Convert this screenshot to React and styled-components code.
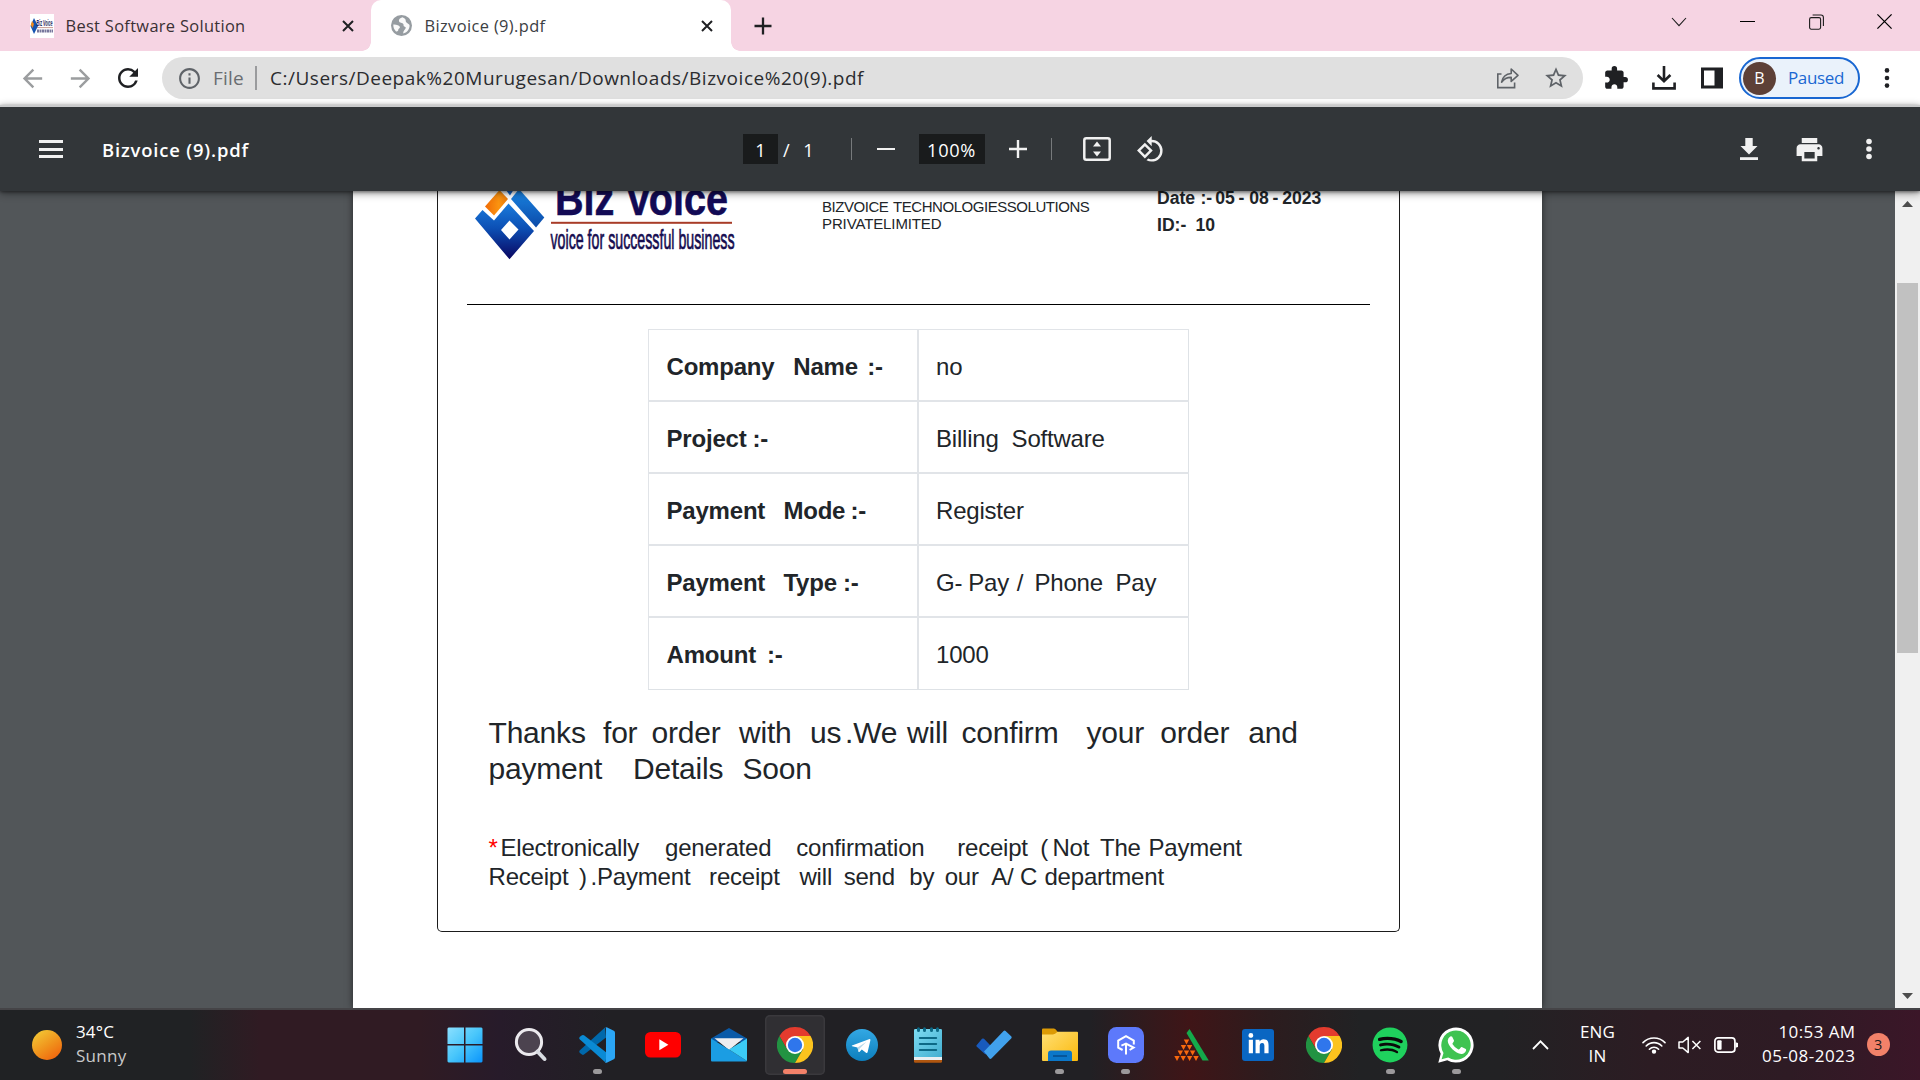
import React, { useLayoutEffect, useRef, useState } from 'react';
import styled, { createGlobalStyle, css } from 'styled-components';
import {
  MdArrowBack,
  MdArrowForward,
  MdRefresh,
  MdInfoOutline,
  MdStarBorder,
  MdExtension,
  MdPrint,
  MdRotate90DegreesCcw,
} from 'react-icons/md';
import { FaSpotify, FaLinkedinIn } from 'react-icons/fa';

const GlobalStyle = createGlobalStyle`
  *, *::before, *::after { box-sizing: border-box; }
  body { margin: 0; overflow: hidden; background: #525659; }
  svg { display: block; flex: none; }
`;

const ui = "'Open Sans', 'Noto Sans', sans-serif";
const doc = "'Liberation Sans', Arial, sans-serif";

const Screen = styled.div`
  width: 1920px;
  height: 1080px;
  display: flex;
  flex-direction: column;
  overflow: hidden;
  font-family: ${ui};
`;

/* ---------- text that is tracked to a given width ---------- */

const Label = styled.span`
  display: inline-block;
  white-space: pre;
  flex: none;
  font-size: ${(p) => p.$size}px;
  font-weight: ${(p) => p.$weight || 400};
  color: ${(p) => p.$color};
  margin-left: ${(p) => p.$ml || 0}px;
  line-height: 24px;
  ${(p) => p.$dy && css`padding-top: ${p.$dy}px;`}
`;

function Fit({ width, children, ...rest }) {
  const ref = useRef(null);
  const [spacing, setSpacing] = useState(0);
  useLayoutEffect(() => {
    const natural = ref.current.getBoundingClientRect().width;
    setSpacing((width - natural) / String(children).length);
  }, [width, children]);
  return (
    <Label ref={ref} style={{ letterSpacing: spacing }} {...rest}>
      {children}
    </Label>
  );
}

/* ---------- tab strip ---------- */

const TabStrip = styled.div`
  height: 51px;
  flex: none;
  display: flex;
  align-items: center;
  background: #f6d4e3;
`;

const Tab = styled.div`
  width: ${(p) => p.$w}px;
  height: 51px;
  flex: none;
  display: flex;
  align-items: center;
  padding: 0 ${(p) => p.$pr}px 0 ${(p) => p.$pl}px;
  ${(p) =>
    p.$active &&
    css`
      position: relative;
      background: #fff;
      border-radius: 10px 10px 0 0;
      &::before,
      &::after {
        content: '';
        position: absolute;
        bottom: 0;
        width: 9px;
        height: 9px;
      }
      &::before {
        left: -9px;
        background: radial-gradient(circle at 0 0, transparent 8.5px, #fff 9px);
      }
      &::after {
        right: -9px;
        background: radial-gradient(circle at 100% 0, transparent 8.5px, #fff 9px);
      }
    `}
`;

const Spacer = styled.div`
  flex: 1;
`;

const Slot = styled.div`
  width: ${(p) => p.$w}px;
  margin-left: ${(p) => p.$ml || 0}px;
  flex: none;
  display: flex;
  justify-content: center;
  align-items: center;
  color: ${(p) => p.$color || '#1f2023'};
`;

const WindowControls = styled.div`
  display: flex;
  height: 43px;
  align-self: flex-start;
  align-items: center;
  margin-left: auto;
  padding-right: 1px;
`;

const Cross = ({ size = 12, stroke = 2, color = '#1f2023' }) => (
  <svg width={size} height={size} viewBox="0 0 12 12">
    <path d="M1 1L11 11M11 1L1 11" stroke={color} strokeWidth={stroke} />
  </svg>
);

const BrandFavicon = () => (
  <svg width="24" height="24" viewBox="0 0 24 24">
    <rect width="24" height="24" fill="#fff" />
    <path d="M4 4L8 12L4 20L0.5 12Z" fill="#1553b0" />
    <path d="M2 7L4 10L2.6 14L0.8 11Z" fill="#f08a1c" />
    <text x="6.5" y="12" fontFamily={doc} fontSize="9" fontWeight="700" fill="#25245c" textLength="16" lengthAdjust="spacingAndGlyphs">Biz Voice</text>
    <path d="M7 13.6H23" stroke="#b98479" strokeWidth="0.8" />
    <path d="M7 17H23" stroke="#77779c" strokeWidth="3" strokeDasharray="2 0.5" />
  </svg>
);

const Globe = () => (
  <svg width="21" height="21" viewBox="0 0 21 21">
    <circle cx="10.5" cy="10.5" r="10.5" fill="#969ca1" />
    <path d="M11.5 2.2C8 3 7.2 5.6 8.6 7.2C10.5 8.3 12.8 8 12.6 10.2C12.2 11.6 14.4 11.2 14.8 12.6C14.4 15.2 12.4 15 12.2 18.5C15.8 17.8 18.6 14.7 18.6 10.6C18.4 9 16.6 9 15.6 7.6C14.2 6.8 15.4 4.4 13.6 3.4Z" fill="#fff" opacity="0.95" />
    <path d="M2.3 9.6C5 9.4 8.6 10.2 9 12.2C8.4 13.8 7 13.6 7.2 15.6C6.6 16.6 5.6 16.6 5 16.4C3 14.6 2.2 12.4 2.3 9.6Z" fill="#fff" opacity="0.95" />
  </svg>
);

/* ---------- address bar ---------- */

const AddressRow = styled.div`
  height: 54px;
  flex: none;
  display: flex;
  align-items: center;
  background: #fff;
`;

const Omnibox = styled.div`
  width: 1421px;
  height: 42px;
  margin-left: 10px;
  flex: none;
  display: flex;
  align-items: center;
  border-radius: 21px;
  background: #e0e0e0;
`;

const Bar = styled.div`
  width: ${(p) => p.$w || 1}px;
  height: ${(p) => p.$h}px;
  margin-left: ${(p) => p.$ml}px;
  flex: none;
  background: ${(p) => p.$color};
`;

const ProfilePill = styled.div`
  width: 121px;
  height: 42px;
  flex: none;
  display: flex;
  align-items: center;
  padding-left: 2px;
  border: 2px solid #1967d2;
  border-radius: 21px;
  background: #eaf2fb;
`;

const Avatar = styled.div`
  width: 33px;
  height: 33px;
  border-radius: 50%;
  flex: none;
  display: flex;
  align-items: center;
  justify-content: center;
  background: #5d4037;
  color: #fff;
  font-size: 16px;
`;

const Dots = ({ color, r = 2.3, gap = 7.5 }) => (
  <svg width="6" height="22" viewBox="-3 -11 6 22" fill={color}>
    <circle cy={-gap} r={r} />
    <circle r={r} />
    <circle cy={gap} r={r} />
  </svg>
);

const ShareIcon = () => (
  <svg width="24" height="22" viewBox="0 0 24 22" fill="none" stroke="#5f6368" strokeWidth="1.6">
    <path d="M5.5 7H1.8V20.6H18.6V15.5" />
    <path d="M5.6 15.2C6.6 9.6 9.6 6.9 15.2 6.5V2L22 8.4L15.2 14.4V10.4C10.8 10.3 8.2 11.6 5.6 15.2Z" strokeLinejoin="round" />
  </svg>
);

const TrayDownload = () => (
  <svg width="24" height="24" viewBox="0 0 24 24" fill="none" stroke="#1f2023" strokeWidth="2.6">
    <path d="M12 0V14M5.6 9L12 15.2L18.4 9" />
    <path d="M1.4 16.5V22.4H22.6V16.5" />
  </svg>
);

const SidePanel = () => (
  <svg width="22" height="22" viewBox="0 0 22 22">
    <path fillRule="evenodd" d="M0 0.5H22V21.5H0ZM3 3.5V18.5H13.5V3.5Z" fill="#1f2023" />
  </svg>
);

/* ---------- PDF viewer toolbar ---------- */

const ViewerBar = styled.div`
  height: 86px;
  flex: none;
  display: flex;
  align-items: center;
  position: relative;
  z-index: 2;
  border-top: 2px solid #c9cacb;
  background: #323639;
  box-shadow: 0 2px 8px rgba(0, 0, 0, 0.45), 0 1px 3px rgba(0, 0, 0, 0.4);
`;

const Field = styled.div`
  width: ${(p) => p.$w}px;
  height: 30px;
  margin-left: ${(p) => p.$ml}px;
  flex: none;
  display: flex;
  align-items: center;
  justify-content: center;
  background: #191b1c;
`;

const Burger = styled.div`
  width: 24px;
  height: 18px;
  margin-left: 39px;
  flex: none;
  border-top: 3px solid #f1f1f1;
  border-bottom: 3px solid #f1f1f1;
  padding-top: 4.5px;
  &::before {
    content: '';
    display: block;
    height: 3px;
    background: #f1f1f1;
  }
`;

const FitPage = () => (
  <svg width="28" height="24" viewBox="0 0 28 24">
    <rect x="1.3" y="1.3" width="25.4" height="21.4" rx="2" fill="none" stroke="#f1f1f1" strokeWidth="2.5" />
    <path d="M14 4.6L18 9.4H10ZM14 19.4L18 14.6H10Z" fill="#f1f1f1" />
  </svg>
);

const SaveIcon = () => (
  <svg width="18" height="22" viewBox="0 0 18 22" fill="#f1f1f1">
    <path d="M5.3 0H12.7V8H17.5L9 16.6L0.5 8H5.3Z" />
    <rect y="19.2" width="18" height="2.8" />
  </svg>
);

/* ---------- document ---------- */

const Viewport = styled.div`
  height: 817px;
  flex: none;
  display: flex;
  overflow: hidden;
  background: #525659;
`;

const Sheet = styled.div`
  width: 1189px;
  margin-left: 353px;
  flex: none;
  background: #fff;
  box-shadow: 0 0 7px rgba(0, 0, 0, 0.55);
`;

const Card = styled.div`
  width: 963px;
  height: 741px;
  margin-left: 84px;
  border: 1px solid #1b1b1b;
  border-top: none;
  border-radius: 0 0 5px 5px;
  font-family: ${doc};
  color: #212529;
`;

const Letterhead = styled.div`
  width: 903px;
  height: 114px;
  margin-left: 29px;
  display: flex;
  border-bottom: 1px solid #000;
`;

const Issuer = styled.div`
  width: 272px;
  margin-left: 85px;
  padding-top: 7px;
  font-size: 15px;
  line-height: 17.2px;
`;

const Meta = styled.div`
  margin-left: 63px;
  margin-top: -6px;
  font-size: 17.6px;
  font-weight: 700;
  line-height: 27px;
`;

const Line = styled.div`
  display: flex;
  height: ${(p) => p.$h}px;
  white-space: pre;
`;

const Word = styled.span`
  flex: none;
  width: ${(p) => p.$w}px;
  color: ${(p) => p.$color || 'inherit'};
  letter-spacing: ${(p) => p.$track || 0}px;
`;

const Table = styled.div`
  width: 541px;
  height: 361px;
  margin: 24px 0 0 210px;
  display: grid;
  grid-template-columns: 269px 272px;
  grid-auto-rows: 72px;
  border-bottom: 1px solid #dee2e6;
  border-right: 1px solid #dee2e6;
`;

const Cell = styled.div`
  padding: 0 0 0 ${(p) => (p.$head ? 17.5 : 17)}px;
  border-top: ${(p) => (p.$first ? 1 : 2)}px solid #e1e4e8;
  border-left: ${(p) => (p.$head ? 1 : 2)}px solid #e1e4e8;
  margin-top: ${(p) => (p.$first ? 0 : -1)}px;
  font-size: 24px;
  font-weight: ${(p) => (p.$head ? 700 : 400)};
  line-height: ${(p) => (p.$first ? 73 : 74)}px;
`;

const Thanks = styled.div`
  margin: 25px 0 0 50.5px;
  font-size: 30px;
  line-height: 36px;
`;

const Notice = styled.div`
  margin: 46px 0 0 50.5px;
  font-size: 24px;
  line-height: 29.4px;
`;

const rows = [
  [[['Company', 126.8], ['Name', 74], [':-', 20]], [['no', 30]]],
  [[['Project', 86], [':-', 20]], [['Billing', 75.6], ['Software', 95]]],
  [[['Payment', 116.9], ['Mode', 67], [':-', 20]], [['Register', 95]]],
  [[['Payment', 116.9], ['Type', 59.7], [':-', 20]], [['G-', 32.3], ['Pay', 48.5], ['/', 17.7], ['Phone', 81], ['Pay', 50]]],
  [[['Amount', 100.5], [':-', 20]], [['1000', 60]]],
];

const thanks = [
  [['Thanks', 114.5], ['for', 48.5], ['order', 87.5], ['with', 71], ['us', 35], ['.We', 62], ['will', 54.5], ['confirm', 125], ['your', 73.8], ['order', 87.9], ['and', 60]],
  [['payment', 144.5], ['Details', 109.5], ['Soon', 80]],
];

const notice = [
  [['*', 12, '#ff0000'], ['Electronically', 164.5], ['generated', 131.2], ['confirmation', 161], ['receipt', 83], ['(', 12.3], ['Not', 47.5], ['The', 48.5], ['Payment', 100]],
  [['Receipt', 90.5], [')', 11.6], ['.Payment', 118.5], ['receipt', 90.4], ['will', 44.2], ['send', 65.6], ['by', 35.4], ['our', 46.5], ['A/', 28.8], ['C', 24.5], ['department', 130]],
];

const Words = ({ words, height, track = -0.2 }) => (
  <Line $h={height}>
    {words.map(([text, width, color], i) => (
      <Word key={i} $w={width} $color={color} $track={track}>
        {text}
      </Word>
    ))}
  </Line>
);

const BrandLogo = () => (
  <svg width="270" height="80" viewBox="467 191 270 80">
    <defs>
      <linearGradient id="gem" x1="0" y1="0" x2="0" y2="1">
        <stop offset="0" stopColor="#1a7bdc" />
        <stop offset="0.45" stopColor="#0c4fb4" />
        <stop offset="1" stopColor="#0a0560" />
      </linearGradient>
      <linearGradient id="sky" x1="0" y1="0" x2="0" y2="1">
        <stop offset="0" stopColor="#1a86e4" />
        <stop offset="1" stopColor="#0c4aa8" />
      </linearGradient>
      <linearGradient id="amber" x1="0" y1="0" x2="1" y2="0">
        <stop offset="0" stopColor="#f06a05" />
        <stop offset="0.6" stopColor="#fb9410" />
        <stop offset="1" stopColor="#e8780a" />
      </linearGradient>
    </defs>
    <path d="M485 206.5L499.5 190L508 199L494 215.5Z" fill="url(#amber)" />
    <path d="M503 186L516 186L510 195.5Z" fill="#1263c4" />
    <path d="M475 218.5L482.5 210L494 220.5L508.5 203.5L534 231L509.5 259.3Z M509.5 220.5L501 230L509.5 239.5L518.5 229.5Z" fillRule="evenodd" fill="url(#gem)" />
    <path d="M511 199L519 189L544.3 217.5L536 227.5Z" fill="url(#sky)" />
    <text x="555" y="215" fontFamily={doc} fontSize="46" fontWeight="700" fill="#120a55" stroke="#120a55" strokeWidth="0.6" textLength="173" lengthAdjust="spacingAndGlyphs">Biz Voice</text>
    <rect x="551" y="221.8" width="181" height="2" fill="#a83c28" />
    <text x="550.5" y="249.3" fontFamily={doc} fontSize="28" fill="#150c50" stroke="#150c50" strokeWidth="0.7" textLength="184" lengthAdjust="spacingAndGlyphs">voice for successful business</text>
  </svg>
);

const Scrollbar = styled.div`
  width: 25px;
  margin-left: auto;
  flex: none;
  display: flex;
  flex-direction: column;
  align-items: center;
  padding: 10px 0 9px;
  background: #f0f0f0;
`;

const Thumb = styled.div`
  width: 21px;
  height: 370px;
  margin: 76px 0 auto;
  background: #c1c1c1;
`;

/* ---------- taskbar ---------- */

const Taskbar = styled.div`
  height: 72px;
  flex: none;
  display: flex;
  align-items: center;
  padding-bottom: 1px;
  border-top: 2px solid #454447;
  background: linear-gradient(
    90deg,
    #202224 0,
    #202224 190px,
    #301b23 260px,
    #301b23 420px,
    #271b2a 500px,
    #212024 610px,
    #212024 1090px,
    #3f1517 1190px,
    #2c1c1e 1270px,
    #212224 1360px,
    #222224 1500px,
    #2c1c23 1650px,
    #2e1b24 1790px,
    #3b1628 1920px
  );
`;

const Weather = styled.div`
  width: 435px;
  height: 100%;
  flex: none;
  display: flex;
  align-items: center;
  padding-left: 32px;
`;

const Stack = styled.div`
  display: flex;
  flex-direction: column;
  flex: none;
  align-items: ${(p) => p.$align};
  width: ${(p) => p.$w}px;
  margin-left: ${(p) => p.$ml}px;
  padding-bottom: 1px;
`;

const Sun = styled.div`
  width: 30px;
  height: 30px;
  flex: none;
  border-radius: 50%;
  background: linear-gradient(145deg, #f2c534 10%, #f0901b 55%, #f0650e 90%);
`;

const Apps = styled.div`
  display: flex;
  gap: 6.1px;
`;

const Tile = styled.div`
  width: 60px;
  height: 60px;
  flex: none;
  display: flex;
  align-items: center;
  justify-content: center;
  position: relative;
  border-radius: 5px;
  ${(p) =>
    p.$active &&
    css`
      background: #302f33;
      box-shadow: inset 0 0 0 1.5px #3a393d;
    `}
`;

const Indicator = styled.div`
  position: absolute;
  bottom: 1px;
  width: ${(p) => (p.$active ? 24 : 9)}px;
  height: 5px;
  border-radius: 2.5px;
  background: ${(p) => (p.$active ? '#f28169' : '#9b999b')};
`;

const WindowsLogo = () => (
  <svg width="36" height="36" viewBox="0 0 36 36">
    <defs>
      <linearGradient id="win" x1="0" y1="0" x2="1" y2="1">
        <stop offset="0" stopColor="#8be0ff" />
        <stop offset="0.5" stopColor="#48c6fb" />
        <stop offset="1" stopColor="#0a94fb" />
      </linearGradient>
    </defs>
    <path fill="url(#win)" d="M1.5 0.5H17V17H0.5V1.5ZM18.5 0.5H34.5L35.5 1.5V17H18.5ZM0.5 18.5H17V35.5H1.5L0.5 34.5ZM18.5 18.5H35.5V34.5L34.5 35.5H18.5Z" />
  </svg>
);

const SearchIcon = () => (
  <svg width="34" height="36" viewBox="0 0 34 36">
    <circle cx="15" cy="15" r="12.6" fill="#4c434f" stroke="#eceaee" strokeWidth="3" />
    <path d="M23.5 24.5L30.5 32" stroke="#d9dce2" strokeWidth="4" strokeLinecap="round" />
  </svg>
);

const VsCode = () => (
  <svg width="36" height="36" viewBox="0 0 36 36">
    <path d="M26 0.5L0.9 23.2Q-0.4 24.6 0.9 26L3 27.6Q4 28.2 5 27.5L27 10.5Z" fill="#0068ab" />
    <path d="M26.5 35.5L0.9 12.6Q-0.4 11.2 0.9 9.8L3 8.2Q4 7.6 5 8.3L28 26Z" fill="#0a8ad4" />
    <path d="M26.5 0.2Q27.4 0 28.2 0.5L34.8 3.8Q36 4.5 36 5.8V30.2Q36 31.5 34.8 32.2L28.2 35.5Q27.2 36 26 35.6Q27 35.2 27 33.5V2.5Q27 0.7 26.5 0.2Z" fill="#2ba6f5" />
  </svg>
);

const YouTube = () => (
  <svg width="36" height="26" viewBox="0 0 36 26">
    <rect width="36" height="25.5" rx="5.5" fill="#f00" />
    <path d="M14.3 7.2L23.4 12.7L14.3 18.2Z" fill="#fff" />
  </svg>
);

const Mail = () => (
  <svg width="36" height="34" viewBox="0 0 36 34">
    <path d="M0 10.5L18 0L36 10.5V14H0Z" fill="#0a5aa8" />
    <path d="M3.5 10.3H32.5L18 22Z" fill="#eeeef0" />
    <path d="M0 10.5L18 21.5L36 33V32.5Q36 33.5 35 33.5H1Q0 33.5 0 32.5Z" fill="#1b9de3" />
    <path d="M36 10.5V33L18 21.5Z" fill="#3bcbf5" />
  </svg>
);

const Chrome = () => (
  <svg width="36" height="36" viewBox="-18 -18 36 36">
    <path d="M0 -9H15.59A18 18 0 0 0 -15.59 -9L-7.8 4.5Z" fill="#e33b2e" />
    <path d="M-7.8 4.5L-15.59 -9A18 18 0 0 0 0 18L7.8 4.5Z" fill="#229342" />
    <path d="M7.8 4.5L0 18A18 18 0 0 0 15.59 -9H0Z" fill="#fcc31e" />
    <circle r="9" fill="#fff" />
    <circle r="7.2" fill="#2f76ec" />
  </svg>
);

const Telegram = () => (
  <svg width="32" height="32" viewBox="0 0 32 32">
    <defs>
      <linearGradient id="tg" x1="0" y1="0" x2="0" y2="1">
        <stop offset="0" stopColor="#33a8e4" />
        <stop offset="1" stopColor="#0d7fbd" />
      </linearGradient>
    </defs>
    <circle cx="16" cy="16" r="16" fill="url(#tg)" />
    <path d="M6 16.6L23.6 10Q24.6 10 24.4 11.2L21.6 23.2Q21.1 24.3 20 23.7L15.8 20.6L13.4 22.9Q12.6 23.4 12.4 22.4L11.5 18.6L6.2 17.3Q5.4 17 6 16.6Z" fill="#fff" />
    <path d="M11.5 18.6L20.5 12.8L13.7 19.4L12.9 22.6Z" fill="#b6d8ea" />
  </svg>
);

const Notepad = () => (
  <svg width="28" height="36" viewBox="0 0 28 36">
    <defs>
      <linearGradient id="np" x1="0" y1="0" x2="1" y2="1">
        <stop offset="0" stopColor="#7edcf2" />
        <stop offset="1" stopColor="#42aed0" />
      </linearGradient>
    </defs>
    <path d="M0 30H28V34.5Q28 35.8 26.8 35.8H1.2Q0 35.8 0 34.5Z" fill="#b0560f" />
    <path d="M0 28H28V33H0Z" fill="#e9eef1" />
    <path d="M0 3.2Q0 2 1.2 2H26.8Q28 2 28 3.2V30H0Z" fill="url(#np)" />
    <path d="M4.5 1.8V3.6M10.5 1.8V3.6M17.5 1.8V3.6M23.5 1.8V3.6" stroke="#0c6986" strokeWidth="3" strokeLinecap="round" />
    <path d="M5.8 11H22.2M5.8 17H22.2M5.8 23H22.2" stroke="#0c6986" strokeWidth="2" strokeLinecap="round" />
  </svg>
);

const Todo = () => (
  <svg width="36" height="30" viewBox="0 0 36 30">
    <path d="M0.6 15.2L6 8.8Q7 8 8 8.8L15.4 16.6L9.4 24.6L0.6 16.4Q0 15.8 0.6 15.2Z" fill="#185abd" />
    <path d="M8 21.5L27.6 1Q28.6 0 29.6 1L35.4 6.6Q36 7.4 35.4 8.2L15.4 28.6Q14.4 29.4 13.4 28.6Z" fill="#41a1ec" />
  </svg>
);

const Folder = () => (
  <svg width="36" height="34" viewBox="0 0 36 34">
    <defs>
      <linearGradient id="fd" x1="0" y1="0" x2="1" y2="1">
        <stop offset="0" stopColor="#ffdf74" />
        <stop offset="1" stopColor="#fbb90c" />
      </linearGradient>
    </defs>
    <path d="M0 1.5Q0 0.5 1 0.5H12Q13.2 0.5 15.5 3.6L14 8H0Z" fill="#dc9a05" />
    <path d="M0 6.5H11Q13 6.4 15.5 3.8H35Q36 3.8 36 4.8V32Q36 33 35 33H1Q0 33 0 32Z" fill="url(#fd)" />
    <path d="M6 33V25.5Q6 22.5 9 22.5H27Q30 22.5 30 25.5V33Z" fill="#0b77c9" />
    <path d="M11 28H25" stroke="#064f8e" strokeWidth="1.6" />
  </svg>
);

const HexApp = () => (
  <svg width="36" height="36" viewBox="0 0 36 36">
    <rect width="36" height="36" rx="8.5" fill="#5d79fb" />
    <g fill="none" stroke="#fff" strokeWidth="2">
      <path d="M14.6 23L10.2 20.6V13.6L18 9.2L25.8 13.6V17.6" />
      <path d="M18 27.4V16.8M13.4 18.6L18 16.6L25.6 20.6L21.6 23" />
    </g>
  </svg>
);

const Pyramid = () => (
  <svg width="36" height="34" viewBox="0 0 36 34">
    <path d="M12.5 5L15.5 1L34.8 32.5H28.5Z" fill="#14aa4b" />
    {[[12.5, 11.5], [9.5, 17], [15.5, 17], [6.3, 22.5], [12.5, 22.5], [18.6, 22.5], [3, 28], [9.2, 28], [15.6, 28], [22, 28]].map(([x, y], i) => (
      <path key={i} d={`M${x - 2.7} ${y}H${x + 2.7}L${x} ${y + 5}Z`} fill="#f9690e" />
    ))}
  </svg>
);

const LinkedInBox = styled.div`
  width: 32px;
  height: 32px;
  border-radius: 3px;
  display: flex;
  align-items: center;
  justify-content: center;
  background: #0a66c2;
  color: #fff;
`;

const SpotifyDisc = styled.div`
  width: 34px;
  height: 34px;
  border-radius: 50%;
  display: flex;
  align-items: center;
  justify-content: center;
  background: #0a0a0a;
  color: #1fd15d;
`;

const WhatsApp = () => (
  <svg width="36" height="36" viewBox="0 0 36 36">
    <path d="M0.3 35.7L2.7 26.7A17.6 17.6 0 1 1 9.3 33.3Z" fill="#fff" />
    <path d="M3.6 32.3L5.5 25.9A14.7 14.7 0 1 1 10.2 30.6Z" fill="#3fc351" />
    <path d="M12.2 9.6Q13.2 8.8 14.2 9.8L16 13.6Q16.2 14.6 14.8 16Q14.2 16.6 14.6 17.3Q16.6 20.8 20.4 22.4Q21 22.6 21.6 22L23 20.3Q23.5 19.8 24.3 20.2L27.8 22Q28.4 22.5 28 23.8Q26.8 27 23.3 26.9Q18.6 26.4 14.4 22.2Q10 17.8 9.7 13.8Q10 11 12.2 9.6Z" fill="#fff" />
  </svg>
);

const apps = [
  { id: 'start', icon: <WindowsLogo /> },
  { id: 'search', icon: <SearchIcon /> },
  { id: 'code', icon: <VsCode />, open: true },
  { id: 'youtube', icon: <YouTube /> },
  { id: 'mail', icon: <Mail /> },
  { id: 'chrome', icon: <Chrome />, open: true, active: true },
  { id: 'telegram', icon: <Telegram /> },
  { id: 'notepad', icon: <Notepad /> },
  { id: 'todo', icon: <Todo /> },
  { id: 'files', icon: <Folder />, open: true },
  { id: 'hex', icon: <HexApp />, open: true },
  { id: 'pyramid', icon: <Pyramid /> },
  { id: 'linkedin', icon: <LinkedInBox><FaLinkedinIn size={23} /></LinkedInBox> },
  { id: 'chrome2', icon: <Chrome /> },
  { id: 'spotify', icon: <SpotifyDisc><FaSpotify size={36} /></SpotifyDisc>, open: true },
  { id: 'whatsapp', icon: <WhatsApp />, open: true },
];

const Badge = styled.div`
  width: 23.5px;
  height: 23.5px;
  margin-left: 11px;
  flex: none;
  border-radius: 50%;
  display: flex;
  align-items: center;
  justify-content: center;
  background: #f28169;
  color: #1c1c1c;
  font-size: 14.5px;
`;

const Wifi = () => (
  <svg width="24" height="18" viewBox="0 0 24 18" fill="none" stroke="#fff" strokeWidth="1.6" strokeLinecap="round">
    <path d="M1 6.6A15.3 15.3 0 0 1 23 6.6M4.2 10A10.8 10.8 0 0 1 19.8 10M7.4 13.2A6.4 6.4 0 0 1 16.6 13.2" />
    <circle cx="12" cy="15.6" r="1.4" fill="#fff" />
  </svg>
);

const Muted = () => (
  <svg width="24" height="18" viewBox="0 0 24 18" fill="none" stroke="#fff" strokeWidth="1.5" strokeLinejoin="round">
    <path d="M1 6H4.8L10.2 1.4V16.6L4.8 12H1Z" />
    <path d="M14.4 5L22.4 13M22.4 5L14.4 13" />
  </svg>
);

const Battery = () => (
  <svg width="24" height="16" viewBox="0 0 24 16">
    <rect x="0.9" y="0.9" width="20" height="14.2" rx="3" fill="none" stroke="#fff" strokeWidth="1.7" />
    <rect x="3.2" y="3.2" width="4.4" height="9.6" rx="1" fill="#fff" />
    <path d="M21.5 5.2L24 6V10L21.5 10.8Z" fill="#fff" />
  </svg>
);

export default function App() {
  return (
    <Screen>
      <GlobalStyle />

      <TabStrip>
        <Tab $w={371} $pl={30} $pr={17}>
          <BrandFavicon />
          <Fit width={180} $size={16.4} $color="#3a3034" $ml={11.5}>Best Software Solution</Fit>
          <Spacer />
          <Cross />
        </Tab>
        <Tab $w={360} $pl={20} $pr={18.5} $active>
          <Globe />
          <Fit width={121} $size={16.4} $color="#3c4043" $ml={12.5}>Bizvoice (9).pdf</Fit>
          <Spacer />
          <Cross />
        </Tab>
        <Slot $w={18} $ml={23}>
          <svg width="18" height="18" viewBox="0 0 18 18">
            <path d="M9 0.5V17.5M0.5 9H17.5" stroke="#1f2023" strokeWidth="2.3" />
          </svg>
        </Slot>
        <WindowControls>
          <Slot $w={68.6}>
            <svg width="16" height="10" viewBox="0 0 16 10"><path d="M1 1L8 8.6L15 1" fill="none" stroke="#1c1c1c" strokeWidth="1.1" /></svg>
          </Slot>
          <Slot $w={68.6}>
            <svg width="15" height="1" viewBox="0 0 15 1"><rect width="15" height="1" fill="#000" /></svg>
          </Slot>
          <Slot $w={68.6}>
            <svg width="15" height="16" viewBox="0 0 15 16" fill="none" stroke="#1c1c1c" strokeWidth="1.1">
              <rect x="0.6" y="3.6" width="11" height="11.6" rx="1.6" />
              <path d="M3.6 1H12Q14.4 1 14.4 3.4V12" />
            </svg>
          </Slot>
          <Slot $w={68.6}><Cross size={17} stroke={0.9} color="#000" /></Slot>
        </WindowControls>
      </TabStrip>

      <AddressRow>
        <Slot $w={48} $ml={8} $color="#9b9d9f"><MdArrowBack size={29} /></Slot>
        <Slot $w={48} $color="#9b9d9f"><MdArrowForward size={29} /></Slot>
        <Slot $w={48}><MdRefresh size={30} /></Slot>
        <Omnibox>
          <Slot $w={24} $ml={15} $color="#5f6368"><MdInfoOutline size={25} /></Slot>
          <Fit width={31} $size={19} $color="#6a6d71" $ml={12}>File</Fit>
          <Bar $w={2} $h={24} $ml={11} $color="#9a9b9d" />
          <Fit width={594} $size={19} $color="#2b2c2f" $ml={13}>C:/Users/Deepak%20Murugesan/Downloads/Bizvoice%20(9).pdf</Fit>
          <Spacer />
          <Slot $w={48}><ShareIcon /></Slot>
          <Slot $w={48} $color="#5f6368"><MdStarBorder size={26} /></Slot>
          <Slot $w={3} />
        </Omnibox>
        <Slot $w={48} $ml={9}><MdExtension size={26} /></Slot>
        <Slot $w={48}><TrayDownload /></Slot>
        <Slot $w={48}><SidePanel /></Slot>
        <Slot $w={3} />
        <ProfilePill>
          <Avatar>B</Avatar>
          <Fit width={56} $size={17} $color="#1967d2" $ml={12}>Paused</Fit>
        </ProfilePill>
        <Slot $w={54}><Dots color="#1f2023" r={2.3} gap={7.6} /></Slot>
      </AddressRow>

      <ViewerBar>
        <Burger />
        <Fit width={147} $size={18.4} $weight={600} $color="#fff" $ml={39} $dy={2}>Bizvoice (9).pdf</Fit>
        <Field $w={35} $ml={494}><Label $size={18.2} $color="#fff" $dy={2}>1</Label></Field>
        <Label $size={18.2} $color="#fff" $ml={5} $dy={2}>/</Label>
        <Label $size={18.2} $color="#fff" $ml={13.5} $dy={2}>1</Label>
        <Slot $w={37} />
        <Bar $w={1} $h={22} $ml={0} $color="#777a7c" />
        <Bar $w={18} $h={2.5} $ml={25} $color="#f1f1f1" />
        <Field $w={66} $ml={24}><Fit width={49} $size={18.2} $color="#fff" $dy={2}>100%</Fit></Field>
        <Slot $w={18} $ml={24}>
          <svg width="18" height="18" viewBox="0 0 18 18"><path d="M9 0V18M0 9H18" stroke="#f1f1f1" strokeWidth="2.4" /></svg>
        </Slot>
        <Bar $w={1} $h={22} $ml={24} $color="#777a7c" />
        <Slot $w={28} $ml={31}><FitPage /></Slot>
        <Slot $w={30} $ml={25} $color="#f1f1f1"><MdRotate90DegreesCcw size={29} /></Slot>
        <Spacer />
        <Slot $w={60}><SaveIcon /></Slot>
        <Slot $w={60} $color="#f1f1f1"><MdPrint size={31} /></Slot>
        <Slot $w={60}><Dots color="#f1f1f1" r={2.8} gap={7.5} /></Slot>
        <Slot $w={21} />
      </ViewerBar>

      <Viewport>
        <Sheet>
          <Card>
            <Letterhead>
              <BrandLogo />
              <Issuer>
                <Words height={17.2} track={-0.45} words={[['BIZVOICE', 71], ['TECHNOLOGIESSOLUTIONS', 200]]} />
                <Words height={17.2} track={-0.12} words={[['PRIVATELIMITED', 200]]} />
              </Issuer>
              <Meta>
                <Words height={27} track={0} words={[['Date', 43.5], [':-', 14.8], ['05', 23.2], ['-', 10.7], ['08', 23.3], ['-', 9.8], ['2023', 45]]} />
                <Words height={27} track={0} words={[['ID:-', 38.5], ['10', 30]]} />
              </Meta>
            </Letterhead>
            <Table>
              {rows.map(([head, value], i) => (
                <React.Fragment key={i}>
                  <Cell $head $first={i === 0}><Words words={head} /></Cell>
                  <Cell $first={i === 0}><Words words={value} /></Cell>
                </React.Fragment>
              ))}
            </Table>
            <Thanks>{thanks.map((words, i) => <Words key={i} height={36} words={words} />)}</Thanks>
            <Notice>{notice.map((words, i) => <Words key={i} height={29.4} words={words} />)}</Notice>
          </Card>
        </Sheet>
        <Scrollbar>
          <svg width="11" height="6" viewBox="0 0 11 6"><path d="M5.5 0L11 6H0Z" fill="#4d4d4d" /></svg>
          <Thumb />
          <svg width="11" height="6" viewBox="0 0 11 6"><path d="M5.5 6L11 0H0Z" fill="#4d4d4d" /></svg>
        </Scrollbar>
      </Viewport>

      <Taskbar>
        <Weather>
          <Sun />
          <Stack $align="flex-start" $w={100} $ml={14}>
            <Fit width={38} $size={17} $color="#fff">34°C</Fit>
            <Fit width={50.5} $size={17} $color="#c9c9c9">Sunny</Fit>
          </Stack>
        </Weather>
        <Apps>
          {apps.map((app) => (
            <Tile key={app.id} $active={app.active}>
              {app.icon}
              {app.open && <Indicator $active={app.active} />}
            </Tile>
          ))}
        </Apps>
        <Spacer />
        <Slot $w={20}>
          <svg width="17" height="10" viewBox="0 0 17 10"><path d="M1 9L8.5 1.4L16 9" fill="none" stroke="#fff" strokeWidth="1.8" /></svg>
        </Slot>
        <Stack $align="center" $w={60} $ml={17.5}>
          <Fit width={35} $size={17} $color="#fff">ENG</Fit>
          <Fit width={18} $size={17} $color="#fff">IN</Fit>
        </Stack>
        <Slot $w={36} $ml={8}><Wifi /></Slot>
        <Slot $w={36}><Muted /></Slot>
        <Slot $w={36}><Battery /></Slot>
        <Stack $align="flex-end" $w={112} $ml={0}>
          <Fit width={77} $size={17} $color="#fff">10:53 AM</Fit>
          <Fit width={93.5} $size={17} $color="#fff">05-08-2023</Fit>
        </Stack>
        <Badge>3</Badge>
        <Slot $w={30} />
      </Taskbar>
    </Screen>
  );
}
